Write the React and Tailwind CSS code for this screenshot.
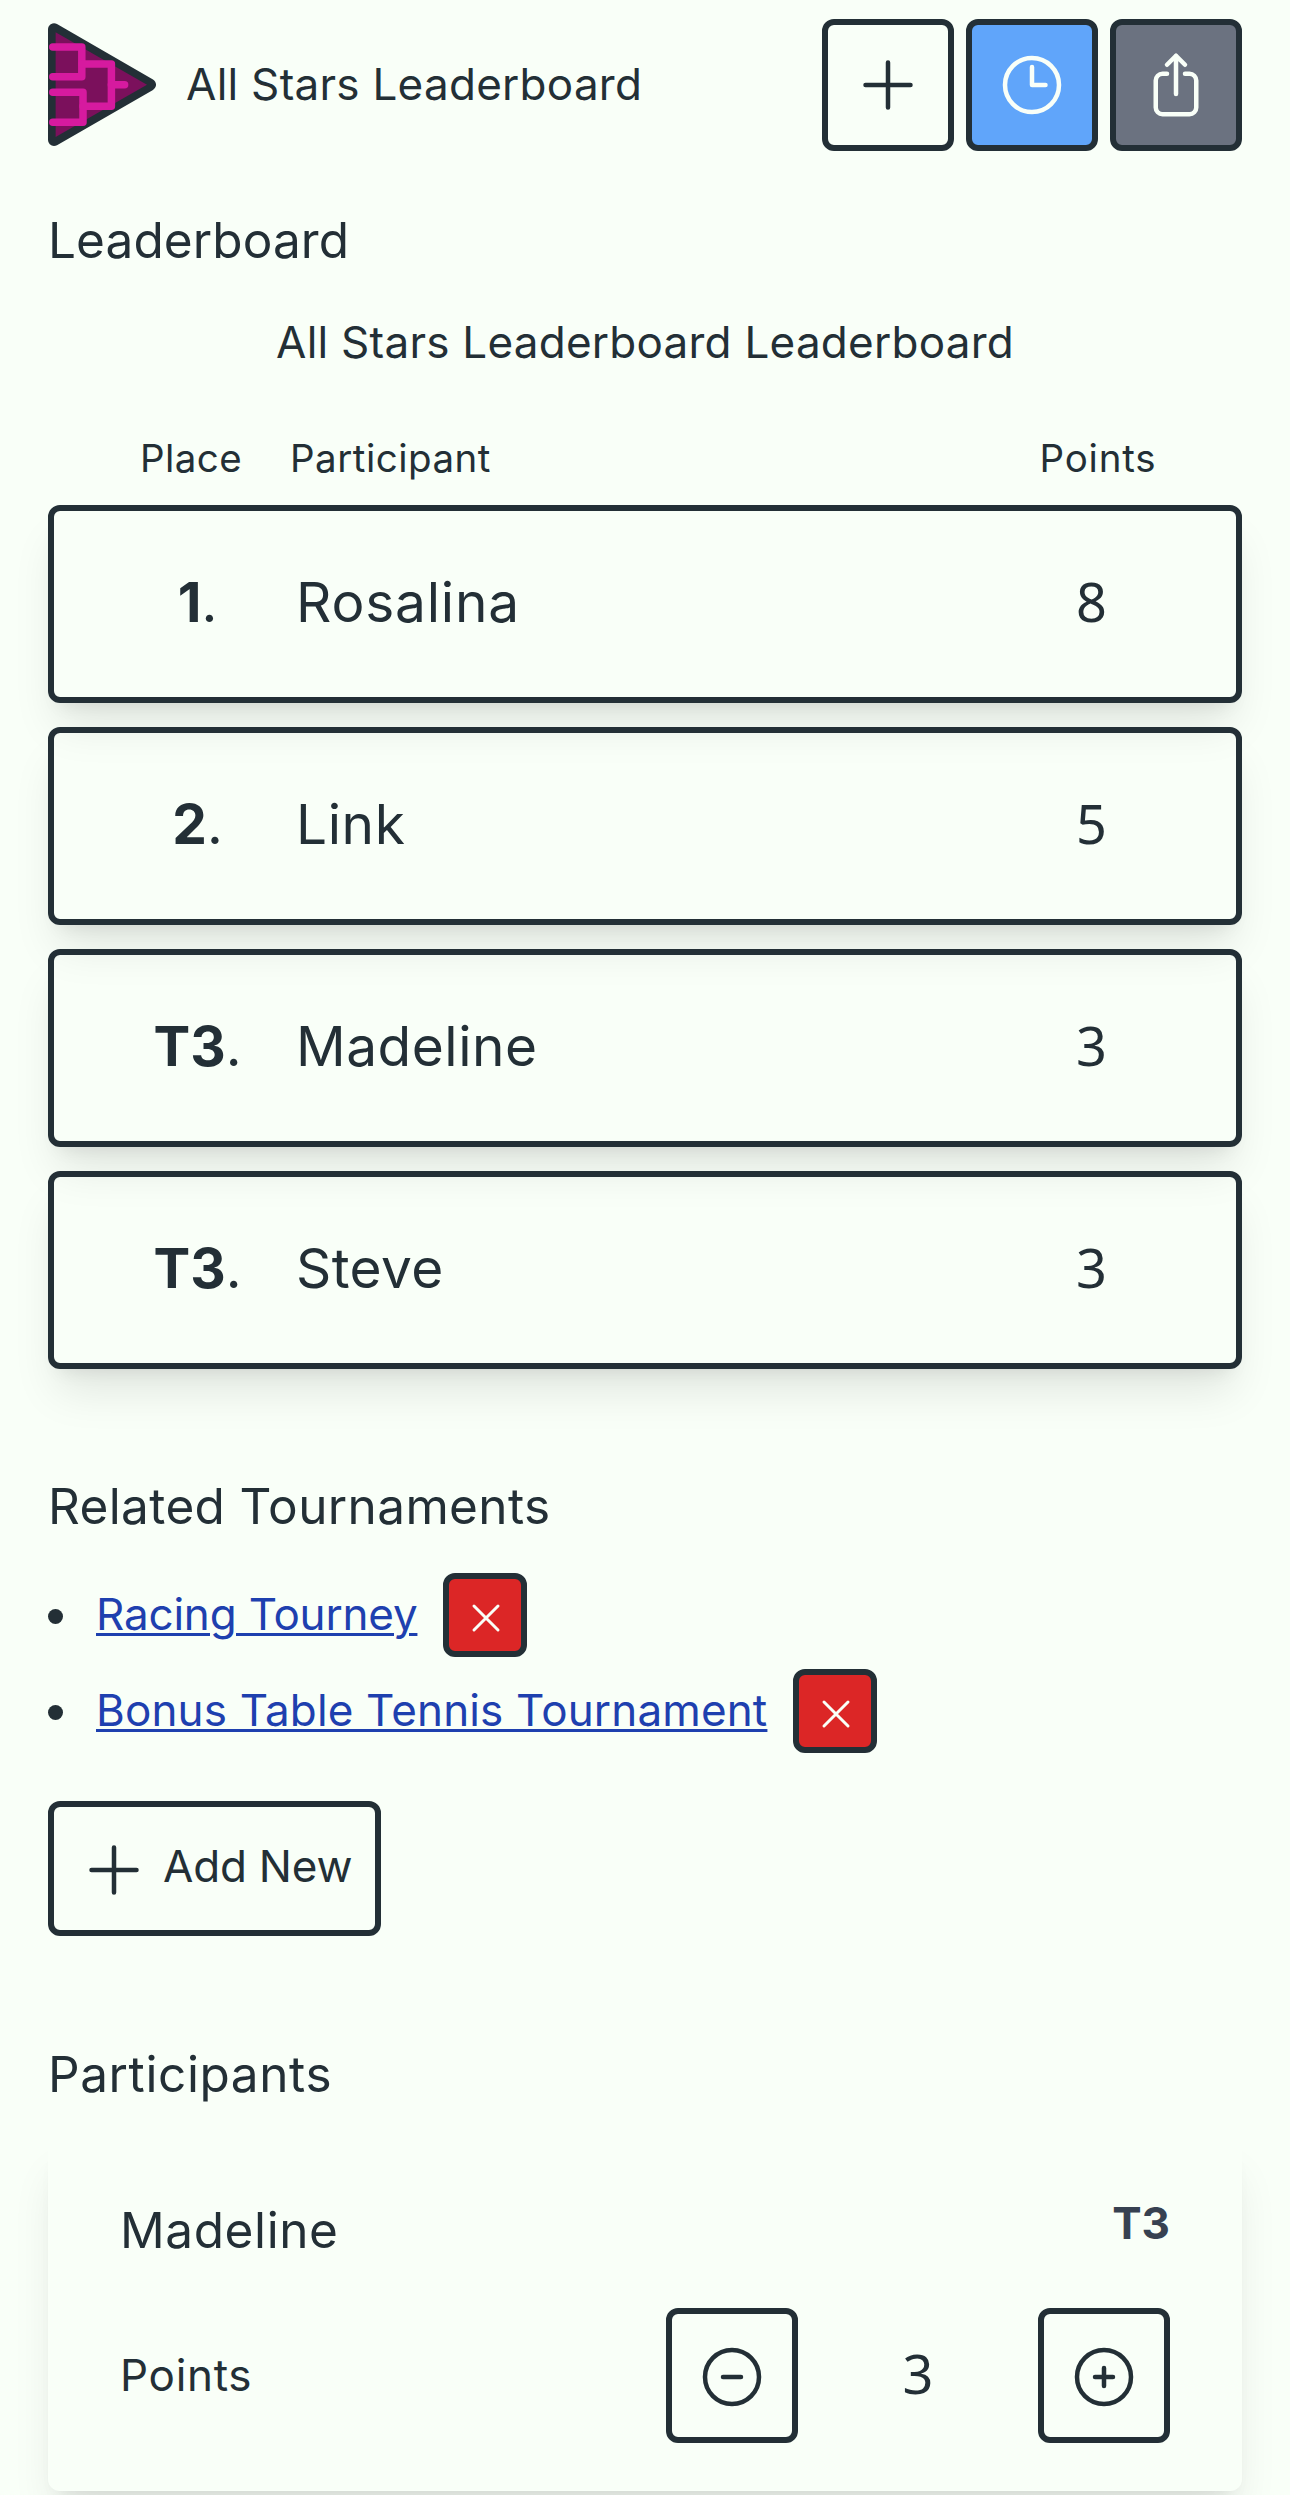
import React from "react";

const standings = [
  { place: "1", name: "Rosalina", points: 8, spacing: "tracking-[0.8px]" },
  { place: "2", name: "Link", points: 5, spacing: "tracking-[0.6px]" },
  { place: "T3", name: "Madeline", points: 3, spacing: "tracking-[0.5px]" },
  { place: "T3", name: "Steve", points: 3, spacing: "tracking-[0.4px]" },
];

const tournaments = [
  { name: "Racing Tourney", spacing: "tracking-[-0.19px]" },
  { name: "Bonus Table Tennis Tournament", spacing: "tracking-[0.15px]" },
];

const ICONS = {
  plus: "M12 4.5v15m7.5-7.5h-15",
  clock: "M12 6v6h4.5m4.5 0a9 9 0 1 1-18 0 9 9 0 0 1 18 0Z",
  share:
    "M9 8.25H7.5a2.25 2.25 0 0 0-2.25 2.25v9a2.25 2.25 0 0 0 2.25 2.25h9a2.25 2.25 0 0 0 2.25-2.25v-9a2.25 2.25 0 0 0-2.25-2.25H15m0-3-3-3m0 0-3 3m3-3V15",
  close: "M6 18 18 6M6 6l12 12",
  minusCircle: "M15 12H9m12 0a9 9 0 1 1-18 0 9 9 0 0 1 18 0Z",
  plusCircle: "M12 9v6m3-3H9m12 0a9 9 0 1 1-18 0 9 9 0 0 1 18 0Z",
};

function Icon({ name, className = "size-[72px]" }) {
  return (
    <svg
      viewBox="0 0 24 24"
      fill="none"
      stroke="currentColor"
      strokeWidth="1.5"
      strokeLinecap="round"
      strokeLinejoin="round"
      className={`shrink-0 ${className}`}
    >
      <path d={ICONS[name]} />
    </svg>
  );
}

function Logo() {
  return (
    <svg viewBox="48 23 109 124" className="h-[124px] w-[109px] shrink-0">
      <path
        d="M54 29.3V140L150 84.7Z"
        fill="#232f36"
        stroke="#232f36"
        strokeWidth="12"
        strokeLinejoin="round"
      />
      <path d="M55.6 32.3V137L147 84.7Z" fill="#7b105c" />
      <g
        fill="none"
        stroke="#d61a9f"
        strokeWidth="7.5"
        strokeLinecap="round"
        strokeLinejoin="round"
      >
        <path d="M52.8 47H81.8V76.8H52.8" />
        <path d="M52.8 92.2H83V122.2H52.8" />
        <path d="M82 63.9H111.4V106.3H83" />
        <path d="M111.4 84.8H124.6" />
      </g>
    </svg>
  );
}

const buttonBase =
  "flex shrink-0 items-center justify-center rounded-[12px] border-[6px] border-[#232f36]";

export default function App() {
  return (
    <div className="h-[2495px] w-[1290px] overflow-hidden bg-[#f9fff8] px-12 pt-[19px] font-['Inter',sans-serif] leading-none text-[#232f36]">
      <header className="flex h-[132px] items-center">
        <Logo />
        <h1 className="ml-[29px] flex-1 pb-[2px] text-[44px] tracking-[0.27px] whitespace-nowrap">
          All Stars Leaderboard
        </h1>
        <div className="flex gap-3">
          <button className={`${buttonBase} size-[132px]`}>
            <Icon name="plus" />
          </button>
          <button className={`${buttonBase} size-[132px] bg-[#60a5fa] text-[#f9fff8]`}>
            <Icon name="clock" />
          </button>
          <button className={`${buttonBase} size-[132px] bg-[#6b7280] text-[#f9fff8]`}>
            <Icon name="share" />
          </button>
        </div>
      </header>

      <section>
        <h2 className="mt-[65px] text-[49.5px] leading-[49px] tracking-[0.1px]">Leaderboard</h2>
        <p className="mt-[55px] text-center text-[44px] leading-none tracking-[0.25px]">
          All Stars Leaderboard Leaderboard
        </p>
        <div className="mt-[75px] flex h-[38px] pl-[92px] text-[38.5px] leading-none">
          <span className="w-[150px] tracking-[0.4px]">Place</span>
          <span className="w-[749.5px] tracking-[0.5px]">Participant</span>
          <span className="tracking-[0.8px]">Points</span>
        </div>
        <div className="mt-7 flex flex-col gap-6">
          {standings.map((row) => (
            <div
              key={row.name}
              className="flex h-[198px] items-center rounded-[12px] border-[6px] border-[#232f36] pr-[53px] pb-1 pl-11 text-[55px] leading-none shadow-[0_30px_45px_-9px_rgba(0,0,0,0.1),0_12px_18px_-12px_rgba(0,0,0,0.1)]"
            >
              <div className="w-[198px] pl-px text-center">
                <span className="font-bold">{row.place}</span>.
              </div>
              <div className={`flex-1 ${row.spacing}`}>{row.name}</div>
              <div className="w-[183px] pb-[2px] text-center font-['Noto_Sans',sans-serif] text-[54px]">
                {row.points}
              </div>
            </div>
          ))}
        </div>
      </section>

      <section>
        <h2 className="mt-[113px] text-[49.5px] leading-[49px] tracking-[0.38px]">
          Related Tournaments
        </h2>
        <ul className="mt-[42px] flex flex-col gap-3">
          {tournaments.map((t) => (
            <li key={t.name} className="flex h-[84px] items-center">
              <span className="mt-[3px] mr-[33px] size-[15px] rounded-full bg-[#232f36]" />
              <a
                className={`mb-[2px] text-[44px] leading-none whitespace-nowrap text-[#1e40af] underline decoration-[3px] underline-offset-[3px] ${t.spacing}`}
              >
                {t.name}
              </a>
              <button
                className={`${buttonBase} ml-[26px] size-[84px] bg-[#dc2626] pt-[5px] pl-[2px] text-[#f9fff8]`}
              >
                <Icon name="close" className="size-12" />
              </button>
            </li>
          ))}
        </ul>
        <button
          className={`${buttonBase} mt-12 h-[135px] w-[333px] !justify-start pl-6`}
        >
          <Icon name="plus" className="mt-[3px] size-[72px]" />
          <span className="mb-[5px] ml-[13px] text-[44px] leading-none tracking-[-0.2px] whitespace-nowrap">
            Add New
          </span>
        </button>
      </section>

      <section>
        <h2 className="mt-[114px] text-[49.5px] leading-[49px] tracking-[0.6px]">Participants</h2>
        <div className="mt-[41px] h-[351px] rounded-[12px] px-[72px] pt-[61px] shadow-[0_30px_45px_-9px_rgba(0,0,0,0.1),0_12px_18px_-12px_rgba(0,0,0,0.1)]">
          <div className="flex h-[107px] items-start justify-between">
            <h3 className="mt-[5px] text-[49.5px] leading-[49px] tracking-[0.6px]">Madeline</h3>
            <span className="text-[44px] leading-none font-bold text-[#374151]">T3</span>
          </div>
          <div className="flex items-center">
            <span className="w-[546px] pb-[2px] text-[44px] leading-none tracking-[0.7px]">Points</span>
            <button className={`${buttonBase} h-[135px] w-[132px] pt-[3px]`}>
              <Icon name="minusCircle" />
            </button>
            <span className="flex-1 pb-[5px] text-center font-['Noto_Sans',sans-serif] text-[54px] leading-none">
              3
            </span>
            <button className={`${buttonBase} h-[135px] w-[132px] pt-[3px]`}>
              <Icon name="plusCircle" />
            </button>
          </div>
        </div>
      </section>
    </div>
  );
}
